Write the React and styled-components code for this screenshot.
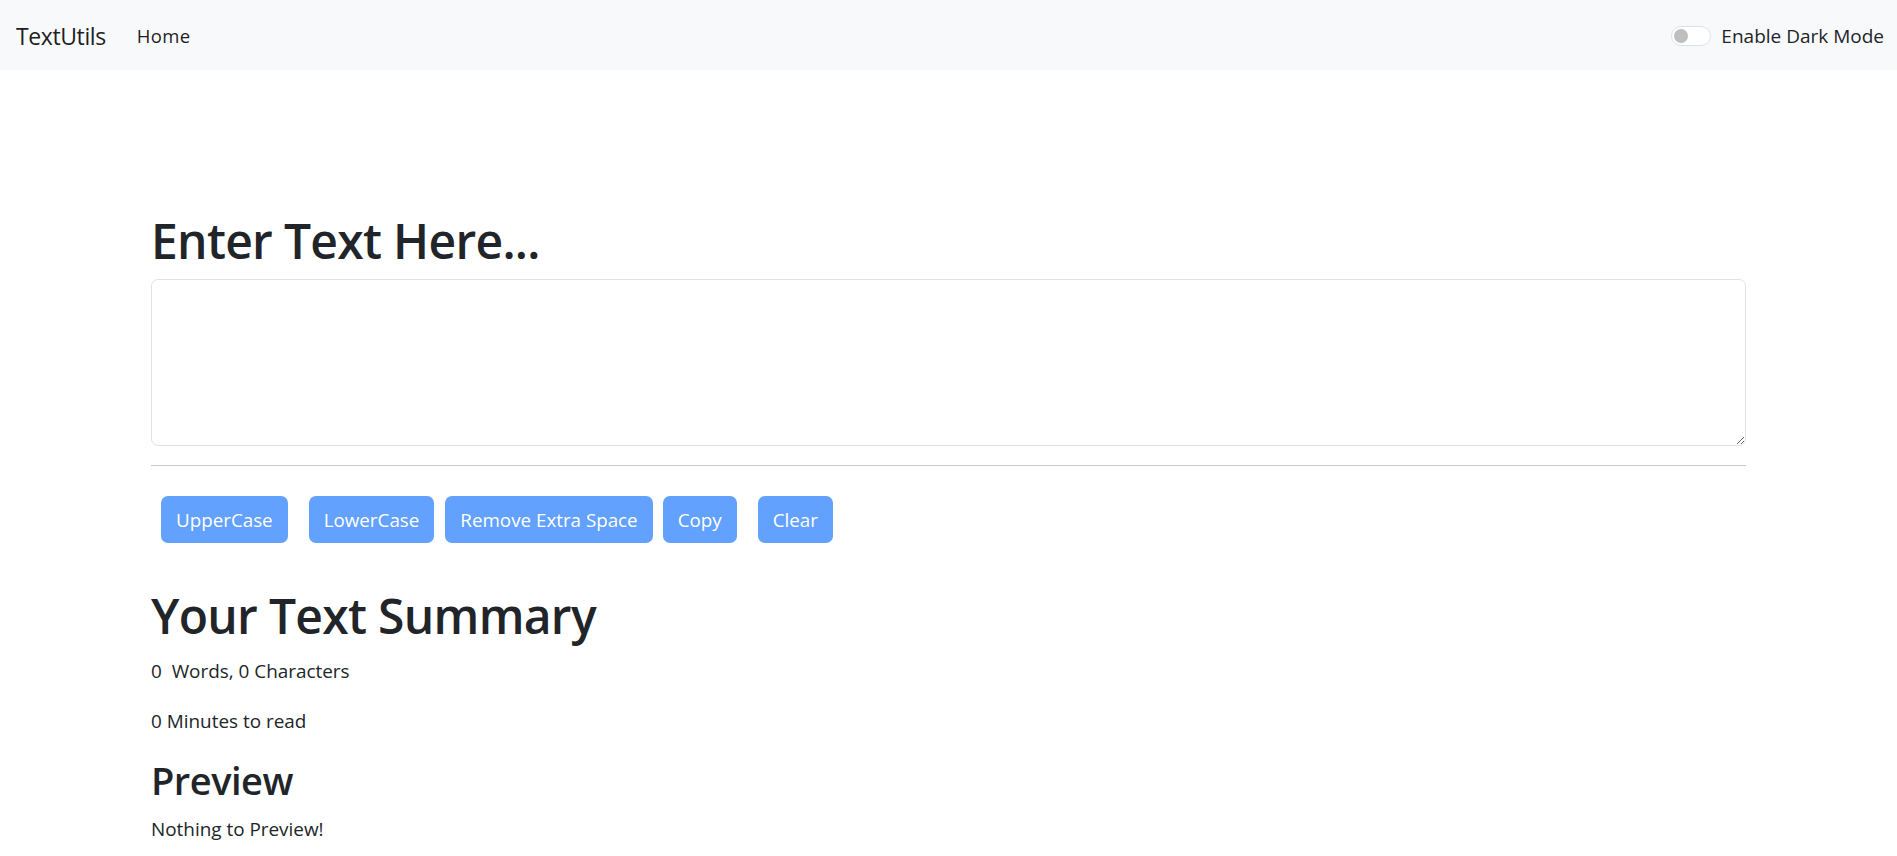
import React, { useState } from "react";
import styled, { createGlobalStyle } from "styled-components";

const GlobalStyle = createGlobalStyle`
  * { box-sizing: border-box; }
  body {
    margin: 0;
    background: #ffffff;
    color: #212529;
    font-family: "Open Sans", "Noto Sans", sans-serif;
    font-size: 20px;
    line-height: 1.5;
  }
`;

const Navbar = styled.nav`
  height: 70px;
  background-color: #f8f9fa;
  display: flex;
  align-items: center;
  justify-content: space-between;
  padding: 2px 13px 0 16px;
`;

const NavLeft = styled.div`
  display: flex;
  align-items: center;
  gap: 31px;
`;

const Brand = styled.a`
  font-size: 23px;
  color: rgba(0, 0, 0, 0.9);
  text-decoration: none;
  letter-spacing: -0.4px;
`;

const NavLink = styled.a`
  font-size: 18.5px;
  color: rgba(0, 0, 0, 0.9);
  text-decoration: none;
  letter-spacing: 0.4px;
`;

const SwitchWrap = styled.label`
  display: flex;
  align-items: center;
  gap: 10px;
  font-size: 19px;
  color: #212529;
  cursor: pointer;
`;

const SwitchTrack = styled.span`
  width: 40px;
  height: 20px;
  border: 1px solid #dee2e6;
  border-radius: 10px;
  background: ${(p) => (p.on ? "#0d6efd" : "#ffffff")};
  display: flex;
  align-items: center;
  justify-content: ${(p) => (p.on ? "flex-end" : "flex-start")};
  padding: 0 2px;
`;

const SwitchKnob = styled.span`
  width: 14px;
  height: 14px;
  border-radius: 50%;
  background: ${(p) => (p.on ? "#ffffff" : "#bfbfbf")};
`;

const Container = styled.main`
  width: 1595px;
  margin: 0 auto;
  padding-top: 141px;
`;

const Heading = styled.h1`
  font-size: 48px;
  font-weight: 600;
  line-height: 60px;
  margin: 0 0 ${(p) => p.gap}px;
  letter-spacing: -0.7px;
`;

const SubHeading = styled.h2`
  font-size: 38px;
  font-weight: 600;
  line-height: 48px;
  margin: 0 0 10px;
  letter-spacing: -0.5px;
`;

const TextArea = styled.textarea`
  display: block;
  width: 100%;
  height: 167px;
  border: 1px solid #dee2e6;
  border-radius: 7px;
  padding: 10px 15px;
  font-family: inherit;
  font-size: 20px;
  color: #212529;
  resize: vertical;
  margin: 0 0 19px;
`;

const Rule = styled.hr`
  border: 0;
  border-top: 1px solid #c8c9ca;
  margin: 0 0 30px;
`;

const ButtonRow = styled.div`
  display: flex;
  align-items: center;
  padding-left: 10px;
  margin-bottom: 43px;
`;

const Button = styled.button`
  height: 47px;
  padding: 0 15px;
  margin-right: ${(p) => p.gap}px;
  border: none;
  border-radius: 7px;
  background-color: #62a1fe;
  color: #ffffff;
  font-family: inherit;
  font-size: 18.8px;
`;

const Text = styled.p`
  margin: 0 0 20px;
  font-size: 18.9px;
  line-height: 30px;
`;

const buttons = [
  { label: "UpperCase", gap: 21 },
  { label: "LowerCase", gap: 11 },
  { label: "Remove Extra Space", gap: 10 },
  { label: "Copy", gap: 21 },
  { label: "Clear", gap: 0 },
];

export default function App() {
  const [text, setText] = useState("");
  const [dark, setDark] = useState(false);

  const words = text.split(/\s+/).filter((w) => w.length !== 0).length;

  return (
    <React.Fragment>
      <GlobalStyle />
      <Navbar>
        <NavLeft>
          <Brand href="#">TextUtils</Brand>
          <NavLink href="#">Home</NavLink>
        </NavLeft>
        <SwitchWrap onClick={() => setDark(!dark)}>
          <SwitchTrack on={dark ? 1 : 0}>
            <SwitchKnob on={dark ? 1 : 0} />
          </SwitchTrack>
          Enable Dark Mode
        </SwitchWrap>
      </Navbar>
      <Container>
        <Heading gap={8}>Enter Text Here...</Heading>
        <TextArea value={text} onChange={(e) => setText(e.target.value)} />
        <Rule />
        <ButtonRow>
          {buttons.map((b) => (
            <Button key={b.label} gap={b.gap} disabled={text.length === 0}>
              {b.label}
            </Button>
          ))}
        </ButtonRow>
        <Heading gap={10}>Your Text Summary</Heading>
        <Text>
          {words}&nbsp; Words, {text.length} Characters
        </Text>
        <Text>{0.008 * words} Minutes to read</Text>
        <SubHeading>Preview</SubHeading>
        <Text>{text.length > 0 ? text : "Nothing to Preview!"}</Text>
      </Container>
    </React.Fragment>
  );
}
